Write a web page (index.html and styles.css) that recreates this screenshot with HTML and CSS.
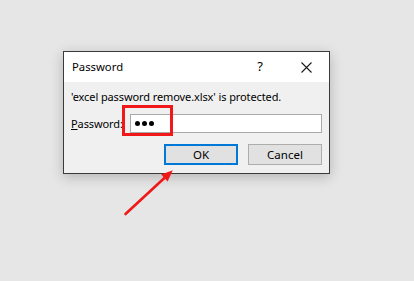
FILE: index.html
```html
<!DOCTYPE html>
<html>
<head>
<meta charset="utf-8">
<link rel="stylesheet" href="styles.css">
</head>
<body>
<div class="dialog">
  <div class="titlebar">
    <span class="title">Password</span>
    <span class="tbtn help">?</span>
    <span class="tbtn close">
      <svg width="11" height="11" viewBox="0 0 11 11"><path d="M0.5 0.5 L10.5 10.5 M10.5 0.5 L0.5 10.5" stroke="#1a1a1a" stroke-width="1.1" fill="none"/></svg>
    </span>
  </div>
  <div class="content">
    <div class="message">'excel password remove.xlsx' is protected.</div>
    <div class="field-row">
      <label class="label"><u>P</u>assword:</label>
      <div class="input"><span class="dot"></span><span class="dot"></span><span class="dot"></span></div>
    </div>
    <div class="buttons">
      <button class="btn default">OK</button>
      <button class="btn">Cancel</button>
    </div>
  </div>
</div>
<div class="highlight"></div>
<svg class="arrow" width="414" height="281" viewBox="0 0 414 281">
  <line x1="125.5" y1="214" x2="166" y2="176.5" stroke="#f01818" stroke-width="2.6" stroke-linecap="round"/>
  <polygon points="172.8,170.2 167.6,181.4 161.2,174.6" fill="#f01818"/>
</svg>
</body>
</html>
```
FILE: styles.css
```css
html, body {
  margin: 0;
  padding: 0;
}
body {
  width: 414px;
  height: 281px;
  background: #e6e6e6;
  font-family: "Noto Sans", "Open Sans", sans-serif;
  font-size: 11px;
  letter-spacing: -0.1px;
  color: #000;
  position: relative;
  overflow: hidden;
}
.dialog {
  margin: 51px 0 0 63px;
  width: 265px;
  border: 1px solid #3a3a3a;
  background: #f0f0f0;
  box-shadow: 0 3px 12px rgba(0, 0, 0, 0.22);
}
.titlebar {
  height: 30px;
  background: #fff;
  display: flex;
  align-items: center;
}
.title {
  flex: 1;
  padding-left: 8px;
  font-size: 11.3px;
  letter-spacing: 0;
  position: relative;
  top: -1px;
}
.tbtn {
  width: 46px;
  height: 30px;
  display: flex;
  align-items: center;
  justify-content: center;
}
.help {
  font-size: 13px;
  position: relative;
  top: -1px;
}
.content {
  padding: 7px 7px 8px 7px;
}
.message {
  line-height: 16px;
  height: 16px;
}
.field-row {
  margin-top: 9px;
  display: flex;
  align-items: center;
  justify-content: space-between;
}
.label {
  line-height: 16px;
}
.input {
  box-sizing: border-box;
  width: 192px;
  height: 19px;
  background: #fff;
  border: 1px solid #a9a9a9;
  display: flex;
  align-items: center;
  gap: 2px;
  padding-left: 4px;
}
.dot {
  width: 5px;
  height: 5px;
  border-radius: 50%;
  background: #000;
}
.buttons {
  margin-top: 11px;
  display: flex;
  justify-content: flex-end;
  gap: 10px;
}
.btn {
  box-sizing: border-box;
  width: 74px;
  height: 21px;
  margin: 0;
  padding: 0;
  background: #e1e1e1;
  border: 1px solid #adadad;
  font-family: inherit;
  font-size: 11.5px;
  color: #000;
}
.btn.default {
  border: 2px solid #0078d7;
}
.highlight {
  position: absolute;
  left: 122px;
  top: 105px;
  width: 45px;
  height: 25px;
  border: 3px solid #f01818;
}
.arrow {
  position: absolute;
  left: 0;
  top: 0;
}
```
